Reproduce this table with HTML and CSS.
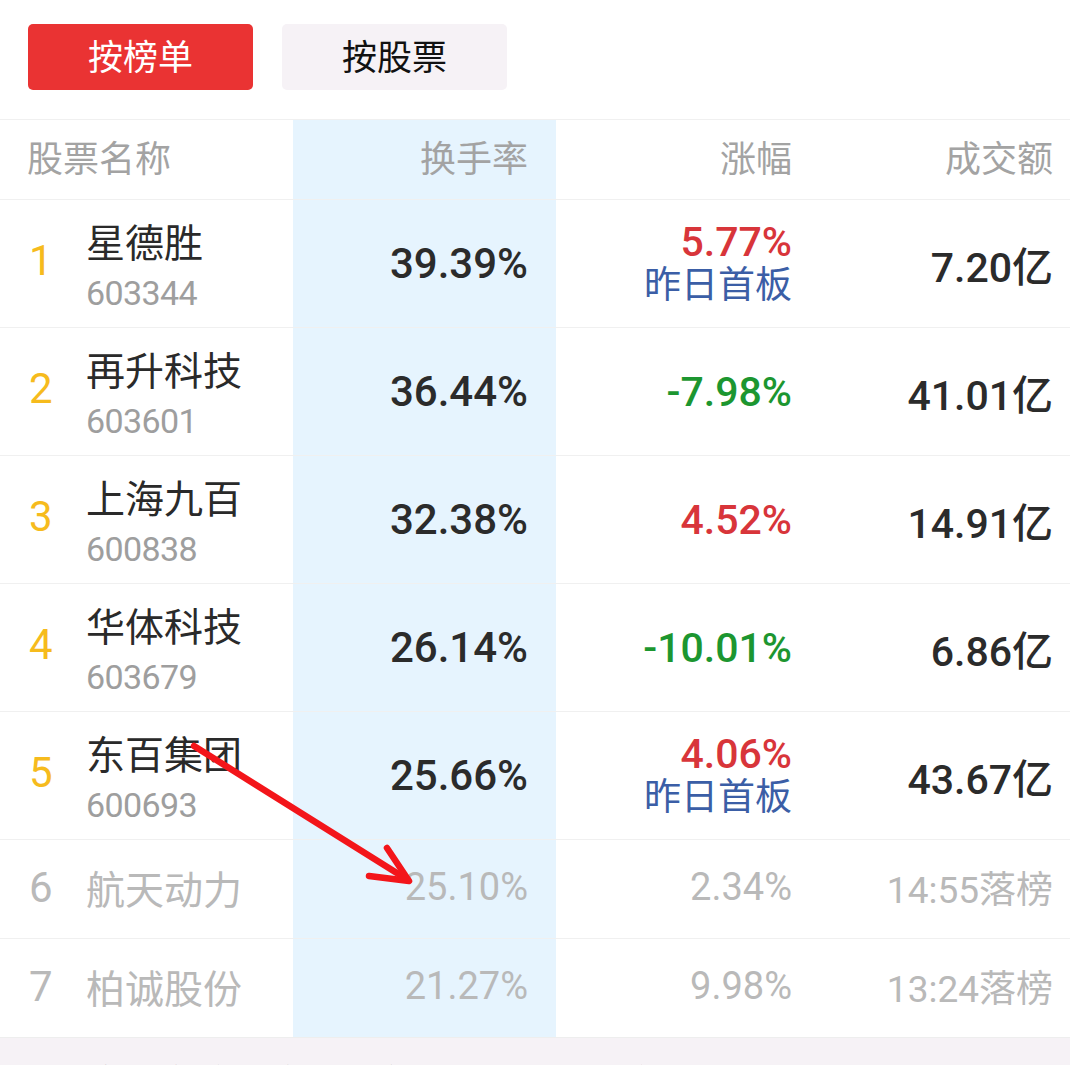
FILE: index.html
```html
<!DOCTYPE html>
<html lang="zh">
<head>
<meta charset="utf-8">
<link rel="stylesheet" href="styles.css">
</head>
<body>
<div class="page">
  <div class="tabs">
    <div class="tab active">按榜单</div>
    <div class="tab">按股票</div>
  </div>
  <div class="table">
    <div class="row head">
      <div class="c name">股票名称</div>
      <div class="c turn">换手率</div>
      <div class="c chg">涨幅</div>
      <div class="c amt">成交额</div>
    </div>
    <div class="row big">
      <div class="c name"><span class="rank">1</span><div class="stock"><div class="sname">星德胜</div><div class="code">603344</div></div></div>
      <div class="c turn num">39.39%</div>
      <div class="c chg"><div class="stack"><span class="up">5.77%</span><span class="tag">昨日首板</span></div></div>
      <div class="c amt val">7.20亿</div>
    </div>
    <div class="row big">
      <div class="c name"><span class="rank">2</span><div class="stock"><div class="sname">再升科技</div><div class="code">603601</div></div></div>
      <div class="c turn num">36.44%</div>
      <div class="c chg"><span class="down">-7.98%</span></div>
      <div class="c amt val">41.01亿</div>
    </div>
    <div class="row big">
      <div class="c name"><span class="rank">3</span><div class="stock"><div class="sname">上海九百</div><div class="code">600838</div></div></div>
      <div class="c turn num">32.38%</div>
      <div class="c chg"><span class="up">4.52%</span></div>
      <div class="c amt val">14.91亿</div>
    </div>
    <div class="row big">
      <div class="c name"><span class="rank">4</span><div class="stock"><div class="sname">华体科技</div><div class="code">603679</div></div></div>
      <div class="c turn num">26.14%</div>
      <div class="c chg"><span class="down">-10.01%</span></div>
      <div class="c amt val">6.86亿</div>
    </div>
    <div class="row big">
      <div class="c name"><span class="rank">5</span><div class="stock"><div class="sname">东百集团</div><div class="code">600693</div></div></div>
      <div class="c turn num">25.66%</div>
      <div class="c chg"><div class="stack"><span class="up">4.06%</span><span class="tag">昨日首板</span></div></div>
      <div class="c amt val">43.67亿</div>
    </div>
    <div class="row off">
      <div class="c name"><span class="rank">6</span><div class="sname">航天动力</div></div>
      <div class="c turn">25.10%</div>
      <div class="c chg">2.34%</div>
      <div class="c amt">14:55落榜</div>
    </div>
    <div class="row off">
      <div class="c name"><span class="rank">7</span><div class="sname">柏诚股份</div></div>
      <div class="c turn">21.27%</div>
      <div class="c chg">9.98%</div>
      <div class="c amt">13:24落榜</div>
    </div>
  </div>
  <div class="footer">换手率较高的个股交易活跃，仅供参考，不构成投资建议</div>
  <svg class="arrow" width="1070" height="1065" viewBox="0 0 1070 1065">
    <g stroke="#f3151a" stroke-width="6.5" stroke-linecap="round" stroke-linejoin="round" fill="none">
      <line x1="194" y1="746" x2="408" y2="880"/>
      <polyline points="387,848 409,881 369,876"/>
    </g>
  </svg>
</div>
</body>
</html>
```

FILE: styles.css
```css
* { box-sizing: border-box; }
html, body { margin: 0; padding: 0; background: #fff; }
body {
  font-family: Roboto, "Noto Sans CJK SC", sans-serif;
  color: #333;
  overflow: hidden;
}
.page { position: relative; width: 1070px; height: 1065px; overflow: hidden; }

.tabs {
  display: flex;
  gap: 29px;
  padding: 24px 28px 29px;
}
.tab {
  width: 225px;
  height: 66px;
  padding-bottom: 5px;
  border-radius: 5px;
  background: #f6f2f6;
  color: #111;
  font-family: "Noto Sans CJK SC", sans-serif;
  font-size: 35px;
  display: flex;
  align-items: center;
  justify-content: center;
}
.tab.active { background: #ea3333; color: #fff; }

.row {
  display: grid;
  grid-template-columns: 293px 263px 264px 1fr;
  border-top: 1px solid #f0f0f0;
}
.row.head { height: 80px; }
.row.big { height: 128px; }
.row.off { height: 99px; }

.c {
  display: flex;
  align-items: center;
  justify-content: flex-end;
  padding-right: 28px;
}
.c.name { justify-content: flex-start; padding-left: 28px; padding-right: 0; }
.c.amt { padding-right: 17px; }
.c.turn { background: #e6f4fe; }

.head .c {
  font-family: "Noto Sans CJK SC", sans-serif;
  font-size: 36px;
  color: #a3a3a3;
  padding-bottom: 8px;
}
.head .c.name { padding-left: 27px; }

.rank {
  width: 58px;
  font-family: Roboto, sans-serif;
  font-size: 42px;
  color: #f6bb1d;
  padding-left: 1px;
  padding-bottom: 6px;
}
.stock { display: flex; flex-direction: column; gap: 10px; padding-top: 2px; }
.sname {
  font-family: "Noto Sans CJK SC", sans-serif;
  font-size: 39px;
  line-height: 46px;
  color: #2a2a2a;
}
.code {
  font-family: Roboto, sans-serif;
  font-size: 34px;
  letter-spacing: -0.6px;
  line-height: 40px;
  color: #9e9e9e;
}
.num {
  font-size: 42px;
  font-weight: 500;
  color: #2b2b2b;
}
.chg span.up, .chg span.down { font-size: 41px; font-weight: 500; }
.up { color: #d8353a; }
.down { color: #1c9630; }
.stack { display: flex; flex-direction: column; align-items: flex-end; padding-bottom: 4px; }
.stack .up { line-height: 40px; }
.tag {
  font-family: "Noto Sans CJK SC", sans-serif;
  font-size: 37px;
  line-height: 40px;
  color: #3b5ea6;
}
.val {
  font-family: Roboto, "Noto Sans CJK SC", sans-serif;
  font-size: 41px;
  font-weight: 500;
  color: #2b2b2b;
}

.off .c { font-size: 38px; color: #b9b9b9; padding-bottom: 4px; }
.off .c.amt { font-size: 37px; }
.off .c.name { padding-bottom: 0; }
.off .rank { color: #b9b9b9; padding-bottom: 4px; }
.off .sname { color: #b9b9b9; font-size: 39px; padding-bottom: 4px; }

.footer {
  height: 60px;
  background: #f6f2f6;
  border-top: 1px solid #eeeeee;
  padding: 22px 0 0 86px;
  font-family: "Noto Sans CJK SC", sans-serif;
  font-size: 36px;
  line-height: 40px;
  color: #555;
  white-space: nowrap;
}

.arrow { position: absolute; left: 0; top: 0; pointer-events: none; }
```
